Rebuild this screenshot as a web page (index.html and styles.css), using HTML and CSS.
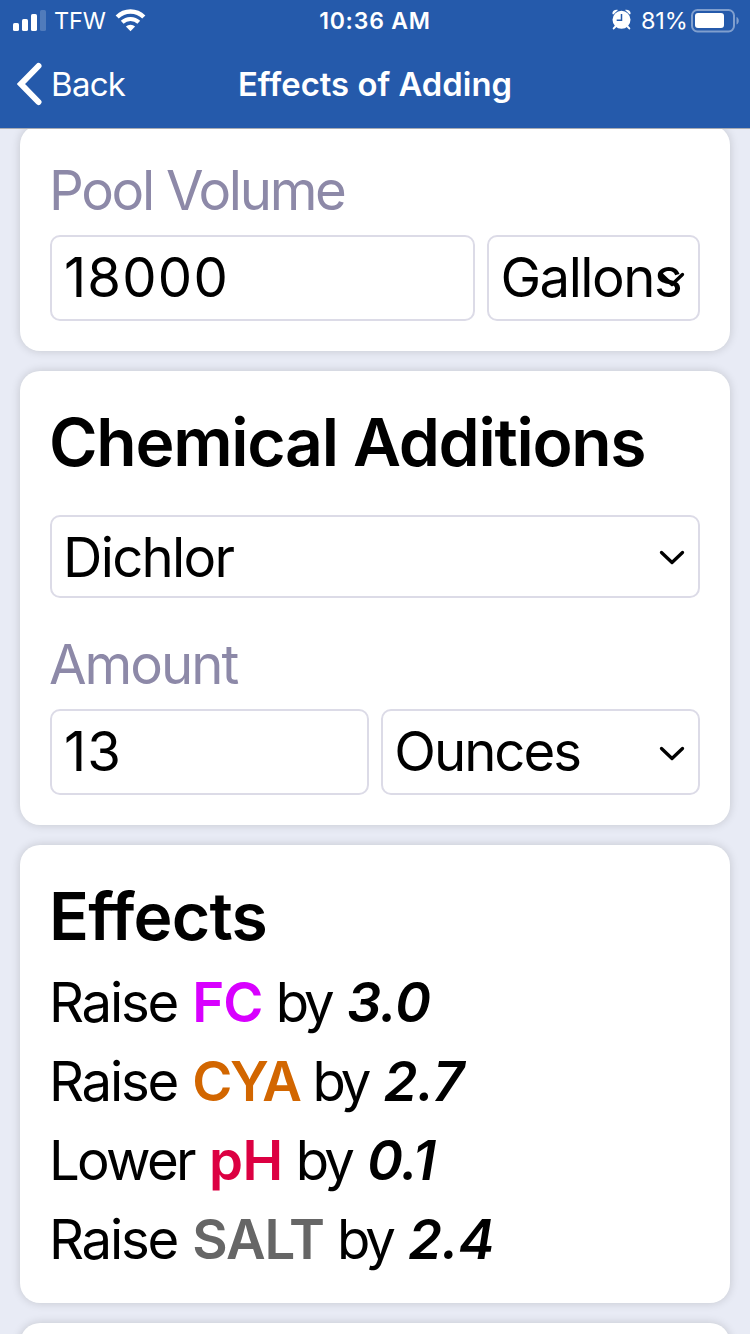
FILE: index.html
```html
<!DOCTYPE html>
<html lang="en">
<head>
<meta charset="utf-8">
<title>Effects of Adding</title>
<link rel="stylesheet" href="styles.css">
</head>
<body>
<header class="header">
  <div class="status">
    <div class="status-left">
      <svg class="signal" width="34" height="22" viewBox="0 0 34 22" fill="#fff">
        <rect x="0" y="14" width="6" height="8" rx="1.6"/>
        <rect x="9" y="10" width="6" height="12" rx="1.6"/>
        <rect x="18" y="5" width="6" height="17" rx="1.6"/>
        <rect x="27" y="1" width="6" height="21" rx="1.6" opacity=".2"/>
      </svg>
      <span class="carrier">TFW</span>
      <svg class="wifi" width="31" height="23" viewBox="0 0 31 23">
        <g fill="none" stroke="#fff">
          <path d="M2.200 8a19 19 0 0 1 26.600 0" stroke-width="4.500"/>
          <path d="M7.200 13.300a11.900 11.900 0 0 1 16.600 0" stroke-width="4"/>
        </g>
        <path d="M15.500 22.200L10.900 17.600a6.600 6.600 0 0 1 9.200 0z" fill="#fff"/>
      </svg>
    </div>
    <div class="clock">10:36 AM</div>
    <div class="status-right">
      <svg class="alarm" width="19" height="21" viewBox="0 0 19 21">
        <g fill="#fff">
          <path d="M.4 4.600C.2 2 3 .2 6 .9L1.500 5.200C1 5.600.5 5.400.4 4.600zM18.600 4.600C18.800 2 16 .2 13 .9l4.500 4.300c.5.400 1 .2 1.100-.6z"/>
          <circle cx="9.500" cy="10.800" r="9"/>
        </g>
        <path d="M3.500 17.500l-1.800 1.900M15.500 17.500l1.800 1.900" stroke="#fff" stroke-width="2" stroke-linecap="round"/>
        <path d="M9.500 5v6.200H4.700" fill="none" stroke="#255aab" stroke-width="1.500"/>
      </svg>
      <span class="percent">81%</span>
      <svg class="battery" width="48" height="24" viewBox="0 0 48 24">
        <rect x="1" y="1" width="42" height="21.500" rx="5.500" fill="none" stroke="#fff" stroke-opacity=".42" stroke-width="2"/>
        <rect x="4" y="4" width="29" height="15" rx="3" fill="#fff"/>
        <path d="M45.500 8c3 1 3 6.500 0 7.500z" fill="#fff" opacity=".42"/>
      </svg>
    </div>
  </div>
  <nav class="nav">
    <div class="back">
      <svg width="26" height="44" viewBox="0 0 26 44"><path d="M21.500 4L4 22l17.500 18" fill="none" stroke="#fff" stroke-width="6" stroke-linecap="round" stroke-linejoin="miter"/></svg>
      <span>Back</span>
    </div>
    <h1 class="title">Effects of Adding</h1>
    <div></div>
  </nav>
</header>
<main class="content">
  <section class="card">
    <div class="label label-volume">Pool Volume</div>
    <div class="row row-wide">
      <div class="field"><span class="digits">18000</span></div>
      <div class="field"><span class="unit-volume">Gallons</span><svg class="chevron" width="26" height="16" viewBox="0 0 26 16"><path d="M2.500 2.500L13 12.500L23.500 2.500"/></svg></div>
    </div>
  </section>
  <section class="card">
    <h2 class="heading heading-chem">Chemical Additions</h2>
    <div class="field field-single"><span class="option">Dichlor</span><svg class="chevron" width="26" height="16" viewBox="0 0 26 16"><path d="M2.500 2.500L13 12.500L23.500 2.500"/></svg></div>
    <div class="label label-amount">Amount</div>
    <div class="row">
      <div class="field"><span class="digits">13</span></div>
      <div class="field"><span class="unit-amount">Ounces</span><svg class="chevron" width="26" height="16" viewBox="0 0 26 16"><path d="M2.500 2.500L13 12.500L23.500 2.500"/></svg></div>
    </div>
  </section>
  <section class="card card-effects">
    <h2 class="heading heading-effects">Effects</h2>
    <div class="effects">
      <p><span class="verb">Raise</span> <b class="fc">FC</b> <span class="by">by</span> <i>3.0</i></p>
      <p><span class="verb">Raise</span> <b class="cya">CYA</b> <span class="by">by</span> <i>2.7</i></p>
      <p><span class="verb verb-lower">Lower</span> <b class="ph">pH</b> <span class="by">by</span> <i>0.1</i></p>
      <p><span class="verb">Raise</span> <b class="salt">SALT</b> <span class="by">by</span> <i>2.4</i></p>
    </div>
  </section>
  <section class="card"></section>
</main>
</body>
</html>
```
FILE: styles.css
```css
* { box-sizing: border-box; }
body {
  margin: 0;
  height: 1334px;
  overflow: hidden;
  background: #e8ebf5;
  font-family: Inter, "Liberation Sans", sans-serif;
  color: #000;
}
h1, h2, p { margin: 0; }
svg { display: block; flex: none; }

.header {
  position: relative;
  z-index: 2;
  height: 129px;
  background: #255aab;
  border-bottom: 1px solid #a9acb4;
  color: #fff;
}
.status {
  display: grid;
  grid-template-columns: 1fr auto 1fr;
  align-items: center;
  height: 41px;
  font-size: 23.5px;
  line-height: 41px;
}
.status-left, .status-right { display: flex; align-items: center; }
.status-left { padding-left: 13px; }
.status-right { justify-content: flex-end; padding-right: 11px; }
.signal { margin-top: -3px; }
.carrier { margin-left: 7px; width: 52px; padding-bottom: 1px; line-height: 39px; letter-spacing: -0.2px; }
.wifi { margin-left: 9px; margin-top: -1px; }
.clock { padding-top: 1px; font-weight: 600; font-size: 23px; letter-spacing: 0.8px; }
.alarm { margin-right: 10px; margin-top: -3px; }
.percent { width: 50px; padding-bottom: 1px; line-height: 39px; white-space: nowrap; letter-spacing: -0.2px; }
.nav {
  display: grid;
  grid-template-columns: 1fr auto 1fr;
  align-items: center;
  height: 87px;
}
.back {
  display: flex;
  align-items: center;
  gap: 8px;
  padding-left: 17px;
  margin-top: -1px;
  font-size: 33px;
  letter-spacing: -0.7px;
}
.title {
  font-size: 32.8px;
  font-weight: 600;
  letter-spacing: 0.02px;
  line-height: 87px;
}

.content {
  display: flex;
  flex-direction: column;
  gap: 20px;
  margin-top: -4px;
  padding: 0 20px;
}
.card {
  flex: none;
  min-height: 60px;
  padding: 30px;
  border-radius: 20px;
  background: #fff;
  box-shadow: 0 0 10px rgba(0, 0, 0, 0.16);
}
.card-effects { padding-bottom: 24px; }
.label {
  margin-bottom: 9px;
  font-size: 54.5px;
  line-height: 71px;
  color: #8d89a8;
}
.label-volume { margin-left: -1px; letter-spacing: -2.3px; }
.label-amount { margin-top: 31px; margin-left: -1px; letter-spacing: -2px; }
.heading { margin-left: -1px; font-size: 66px; font-weight: 600; line-height: 82px; }
.heading-chem { margin-bottom: 32px; letter-spacing: -1.3px; }
.heading-effects { letter-spacing: -0.8px; }
.row { display: grid; grid-template-columns: 1fr 1fr; gap: 12.5px; }
.row-wide { grid-template-columns: 425px 1fr; gap: 12.4px; }
.field {
  position: relative;
  display: flex;
  align-items: center;
  height: 86px;
  min-width: 0;
  padding: 0 10px 2px 11px;
  border: 2px solid #dcdbe7;
  border-radius: 10px;
  font-size: 54.5px;
  line-height: 70px;
  white-space: nowrap;
}
.field-single { height: 83px; padding-bottom: 0; }
.digits { padding-left: 1px; letter-spacing: 1.2px; }
.unit-volume { letter-spacing: -1.5px; }
.unit-amount { letter-spacing: -2px; }
.option { letter-spacing: -1.7px; }
/* the arrow lies over the value when the value is long */
.chevron { position: absolute; right: 13px; top: 35px; }
.field-single .chevron { top: 33px; }
.chevron path {
  fill: none;
  stroke: #000;
  stroke-width: 3.3;
  stroke-linecap: round;
  stroke-linejoin: round;
}
.effects { margin-top: 6px; margin-left: -1px; }
.effects p {
  font-size: 54.5px;
  line-height: 79px;
  letter-spacing: -2.2px;
  white-space: nowrap;
}
.effects b, .effects i { font-weight: 600; }
.effects i { margin-left: 3px; letter-spacing: -0.5px; }
.verb { margin-right: 2px; }
.verb-lower { letter-spacing: -2.7px; }
.by { letter-spacing: -4px; }
.fc { color: #d800ff; letter-spacing: -1px; }
.cya { color: #d26600; letter-spacing: -2.5px; }
.ph { color: #dc0042; letter-spacing: -0.5px; }
.salt { color: #666; letter-spacing: -1.2px; }
```
